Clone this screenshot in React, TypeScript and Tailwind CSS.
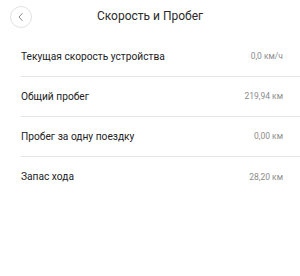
import React from 'react';

// Rows shown on the speed & mileage screen
const rows = [
  { label: 'Текущая скорость устройства', value: '0,0 км/ч' },
  { label: 'Общий пробег', value: '219,94 км' },
  { label: 'Пробег за одну поездку', value: '0,00 км' },
  { label: 'Запас хода', value: '28,20 км' },
];

const App: React.FC = () => {
  return (
    <div className="w-[300px] h-[276px] bg-white font-['Roboto',sans-serif] overflow-hidden">
      {/* Header */}
      <div className="relative h-[34px] flex items-center justify-center">
        <button className="absolute left-[10px] top-[6px] w-[22px] h-[22px] rounded-full border border-[#e2e2e2] flex items-center justify-center">
          <svg width="10" height="10" viewBox="0 0 10 10" fill="none">
            <path d="M6.2 1.5 L3 5 L6.2 8.5" stroke="#8a8a8a" strokeWidth="1" strokeLinecap="round" strokeLinejoin="round" />
          </svg>
        </button>
        <h1 className="text-[12px] text-[#2a2a2a] -mt-[2px]">Скорость и Пробег</h1>
      </div>

      {/* Rows */}
      <div className="mt-[3px] pl-[21px]">
        {rows.map((row, i) => (
          <div
            key={i}
            className={`h-[40px] flex items-center justify-between pr-[17px] ${i < rows.length - 1 ? 'border-b border-[#e6e6e6]' : ''}`}
          >
            <span className="text-[10.2px] text-[#222]">{row.label}</span>
            <span className="text-[8.5px] text-[#8c8c8c]">{row.value}</span>
          </div>
        ))}
      </div>
    </div>
  );
};

export default App;
